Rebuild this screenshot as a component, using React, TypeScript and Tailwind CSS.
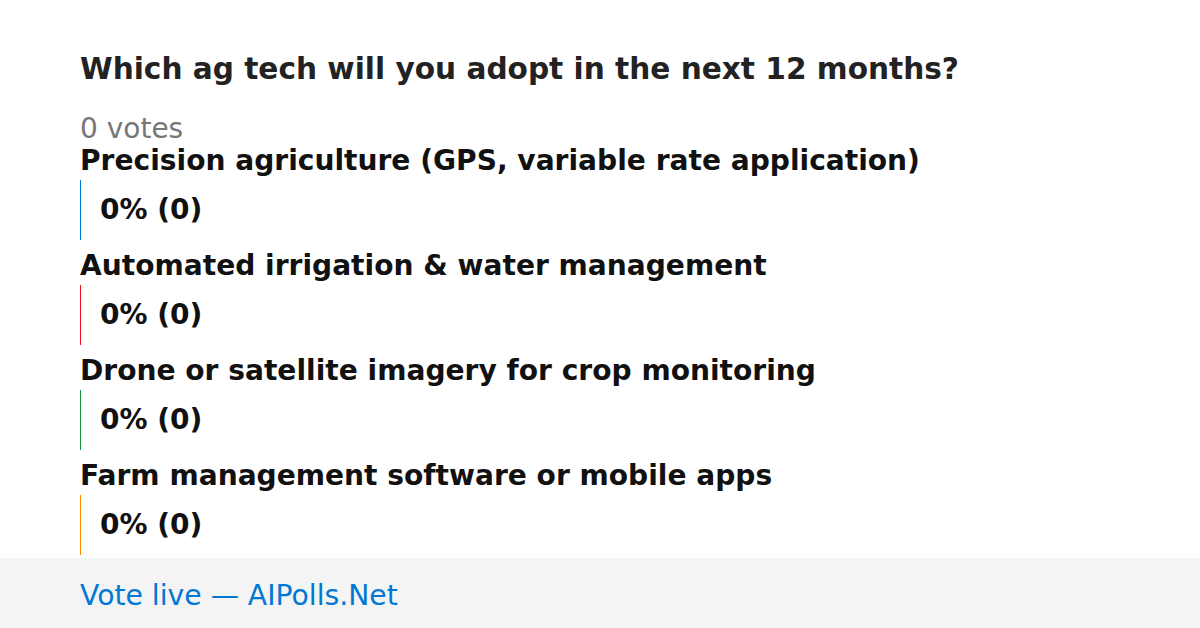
const options = [
  { label: 'Precision agriculture (GPS, variable rate application)', color: 'border-[#0078d4]' },
  { label: 'Automated irrigation & water management', color: 'border-[#e81123]' },
  { label: 'Drone or satellite imagery for crop monitoring', color: 'border-[#10993a]' },
  { label: 'Farm management software or mobile apps', color: 'border-[#ff8c00]' },
];

export default function App() {
  return (
    <div className="w-[1200px] h-[628px] flex flex-col bg-white font-['DejaVu_Sans',sans-serif] overflow-hidden">
      <div className="flex-1 min-h-0 px-20 pt-[51px]">
        <h1 className="text-[29.6px] leading-[36px] font-bold text-[#222]">
          Which ag tech will you adopt in the next 12 months?
        </h1>
        <div className="mt-[26px] text-[28px] leading-[32px] text-[#777]">0 votes</div>
        <div className="flex flex-col gap-[10px]">
          {options.map((o) => (
            <div key={o.label}>
              <div className="text-[28.1px] leading-[32px] font-bold text-[#111]">{o.label}</div>
              <div className={`mt-[3px] h-[60px] border-l ${o.color} pl-[19px] pt-[14px] text-[28px] leading-[32px] font-bold text-[#111]`}>
                0% (0)
              </div>
            </div>
          ))}
        </div>
      </div>
      <div className="h-[70px] shrink-0 bg-[#f4f4f4] px-20 pt-[22px] text-[28.25px] leading-[32px] text-[#0078d4]">
        Vote live — AIPolls.Net
      </div>
    </div>
  );
}
